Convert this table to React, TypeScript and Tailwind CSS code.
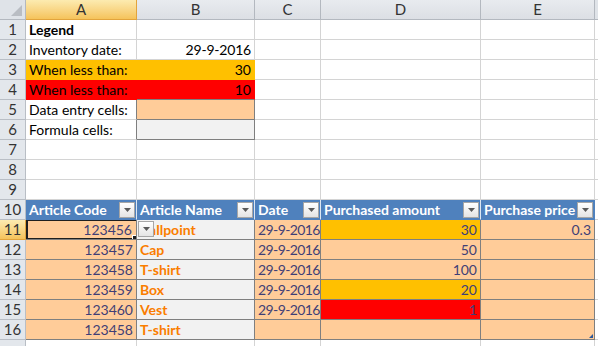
import React from "react";

const GRID = "border-[#d4d4d4]";
const INPUT_TXT = "text-[#3f3f76] border-[#7f7f7f]";
const INPUT = `bg-[#ffcc99] ${INPUT_TXT}`;
const CALC = "bg-[#f2f2f2] text-[#fa7d00] font-bold border-[#7f7f7f]";

const cell = "relative h-5 border-r border-b flex items-center px-[3px] text-[14px] leading-none whitespace-nowrap overflow-hidden";

const Arrow = () => (
  <svg width="7" height="4" viewBox="0 0 7 4">
    <path d="M0 0h7L3.5 4z" fill="#5a5a5a" />
  </svg>
);

const DropButton = ({ className = "" }: { className?: string }) => (
  <div
    className={`w-4 h-4 shrink-0 flex items-center justify-center border border-[#a6a6a6] bg-gradient-to-b from-[#ffffff] to-[#e4e4e4] ${className}`}
  >
    <Arrow />
  </div>
);

const ColHead = ({ label, active }: { label: string; active?: boolean }) => (
  <div
    className={`h-5 flex items-center justify-center text-[15px] text-[#333] border-b border-r ${
      active
        ? "bg-gradient-to-b from-[#fcebb0] to-[#f5c35a] border-[#e2a43c]"
        : "bg-gradient-to-b from-[#e8ebef] to-[#dcdfe4] border-[#b3b8bf]"
    }`}
  >
    {label}
  </div>
);

const RowHead = ({ n, active }: { n?: number; active?: boolean }) => (
  <div
    className={`h-5 flex items-center justify-center text-[15px] text-[#333] border-r border-b ${
      active
        ? "bg-gradient-to-b from-[#fcebb0] to-[#f5c35a] border-[#e2a43c]"
        : "bg-[#e3e7ec] border-[#b9bec5]"
    }`}
  >
    {n}
  </div>
);

const TableHead = ({ label, last }: { label: string; last?: boolean }) => (
  <div
    className={`h-5 border-r border-b ${
      last ? "border-r-[#4f81bd]" : "border-r-[#dce6f1]"
    } border-b-[#4f81bd] bg-[#4f81bd] flex items-center justify-between pl-[3px] pr-[1px] text-[14px] leading-none font-bold text-white whitespace-nowrap overflow-hidden`}
  >
    <span>{label}</span>
    <DropButton />
  </div>
);

type Row = {
  code: string;
  name: string;
  date: string;
  amount: string;
  amountBg: string;
  price: string;
};

const rows: Row[] = [
  { code: "123456", name: "Ballpoint", date: "29-9-2016", amount: "30", amountBg: "bg-[#ffc000]", price: "0.3" },
  { code: "123457", name: "Cap", date: "29-9-2016", amount: "50", amountBg: "bg-[#ffcc99]", price: "" },
  { code: "123458", name: "T-shirt", date: "29-9-2016", amount: "100", amountBg: "bg-[#ffcc99]", price: "" },
  { code: "123459", name: "Box", date: "29-9-2016", amount: "20", amountBg: "bg-[#ffc000]", price: "" },
  { code: "123460", name: "Vest", date: "29-9-2016", amount: "1", amountBg: "bg-[#ff0000]", price: "" },
  { code: "123458", name: "T-shirt", date: "", amount: "", amountBg: "bg-[#ffcc99]", price: "" },
];

const Blank = ({ className = "" }: { className?: string }) => (
  <div className={`${cell} ${GRID} bg-white ${className}`} />
);

export default function App() {
  return (
    <div className="w-[598px] h-[346px] overflow-hidden bg-white font-['Lato','Liberation_Sans',sans-serif] text-black">
      <div className="grid grid-cols-[26px_111px_118px_66px_160px_114px_1fr]">
        {/* column headers */}
        <div className="h-5 relative border-r border-b border-[#b3b8bf] bg-[#dfe3e8]">
          <svg className="absolute right-[3px] bottom-[3px]" width="11" height="11" viewBox="0 0 11 11">
            <path d="M11 0v11H0z" fill="#b9bdc3" />
          </svg>
        </div>
        <ColHead label="A" active />
        <ColHead label="B" />
        <ColHead label="C" />
        <ColHead label="D" />
        <ColHead label="E" />
        <div className="h-5 border-b border-[#b3b8bf] bg-[#dfe3e8]" />

        {/* 1 */}
        <RowHead n={1} />
        <div className={`${cell} ${GRID} font-bold`}>Legend</div>
        <Blank /><Blank /><Blank /><Blank /><Blank className="border-r-0" />

        {/* 2 */}
        <RowHead n={2} />
        <div className={`${cell} ${GRID}`}>Inventory date:</div>
        <div className={`${cell} ${GRID} justify-end tracking-[-0.2px]`}>29-9-2016</div>
        <Blank /><Blank /><Blank /><Blank className="border-r-0" />

        {/* 3 */}
        <RowHead n={3} />
        <div className={`${cell} bg-[#ffc000] border-[#ffc000]`}>When less than:</div>
        <div className={`${cell} bg-[#ffc000] border-[#ffc000] justify-end`}>30</div>
        <Blank /><Blank /><Blank /><Blank className="border-r-0" />

        {/* 4 */}
        <RowHead n={4} />
        <div className={`${cell} bg-[#ff0000] border-[#ff0000]`}>When less than:</div>
        <div className={`${cell} bg-[#ff0000] border-r-[#ff0000] border-b-[#7f7f7f] justify-end`}>10</div>
        <Blank /><Blank /><Blank /><Blank className="border-r-0" />

        {/* 5 */}
        <RowHead n={5} />
        <div className={`${cell} border-b-[#d4d4d4] border-r-[#7f7f7f]`}>Data entry cells:</div>
        <div className={`${cell} ${INPUT}`} />
        <Blank /><Blank /><Blank /><Blank className="border-r-0" />

        {/* 6 */}
        <RowHead n={6} />
        <div className={`${cell} border-b-[#d4d4d4] border-r-[#7f7f7f]`}>Formula cells:</div>
        <div className={`${cell} ${CALC}`} />
        <Blank /><Blank /><Blank /><Blank className="border-r-0" />

        {/* 7-9 */}
        {[7, 8, 9].map((n) => (
          <React.Fragment key={n}>
            <RowHead n={n} />
            <Blank /><Blank /><Blank /><Blank /><Blank /><Blank className="border-r-0" />
          </React.Fragment>
        ))}

        {/* 10 table header */}
        <RowHead n={10} />
        <TableHead label="Article Code" />
        <TableHead label="Article Name" />
        <TableHead label="Date" />
        <TableHead label="Purchased amount" />
        <TableHead label="Purchase price" last />
        <Blank className="border-r-0" />

        {/* 11-16 table rows */}
        {rows.map((r, i) => (
          <React.Fragment key={i}>
            <RowHead n={11 + i} active={i === 0} />
            <div className={`${cell} ${INPUT} justify-end ${i === 0 ? "pr-[4px]" : ""}`}>
              {r.code}
              {i === 0 && (
                <>
                  <div className="absolute left-0 top-[-1px] w-[112px] h-[21px] border-2 border-[#1f1f1f]" />
                  <div className="absolute right-[-1px] bottom-[-1px] w-[5px] h-[5px] bg-[#1f1f1f] border border-white" />
                </>
              )}
            </div>
            <div className={`${cell} ${CALC}`}>
              {r.name}
              {i === 0 && <DropButton className="absolute left-[1px] top-[1px]" />}
            </div>
            <div className={`${cell} ${INPUT} px-[2px] tracking-[-0.6px]`}>{r.date}</div>
            <div className={`${cell} ${INPUT_TXT} ${r.amountBg} justify-end`}>{r.amount}</div>
            <div className={`${cell} ${INPUT} justify-end`}>
              {r.price}
              {i === rows.length - 1 && (
                <svg className="absolute right-[1px] bottom-[1px]" width="4" height="4" viewBox="0 0 4 4">
                  <path d="M4 0v4H0z" fill="#2b579a" />
                </svg>
              )}
            </div>
            <Blank className="border-r-0" />
          </React.Fragment>
        ))}

        {/* 17 (only its top edge is in view) */}
        <RowHead />
        <Blank /><Blank /><Blank /><Blank /><Blank /><Blank className="border-r-0" />
      </div>
    </div>
  );
}
